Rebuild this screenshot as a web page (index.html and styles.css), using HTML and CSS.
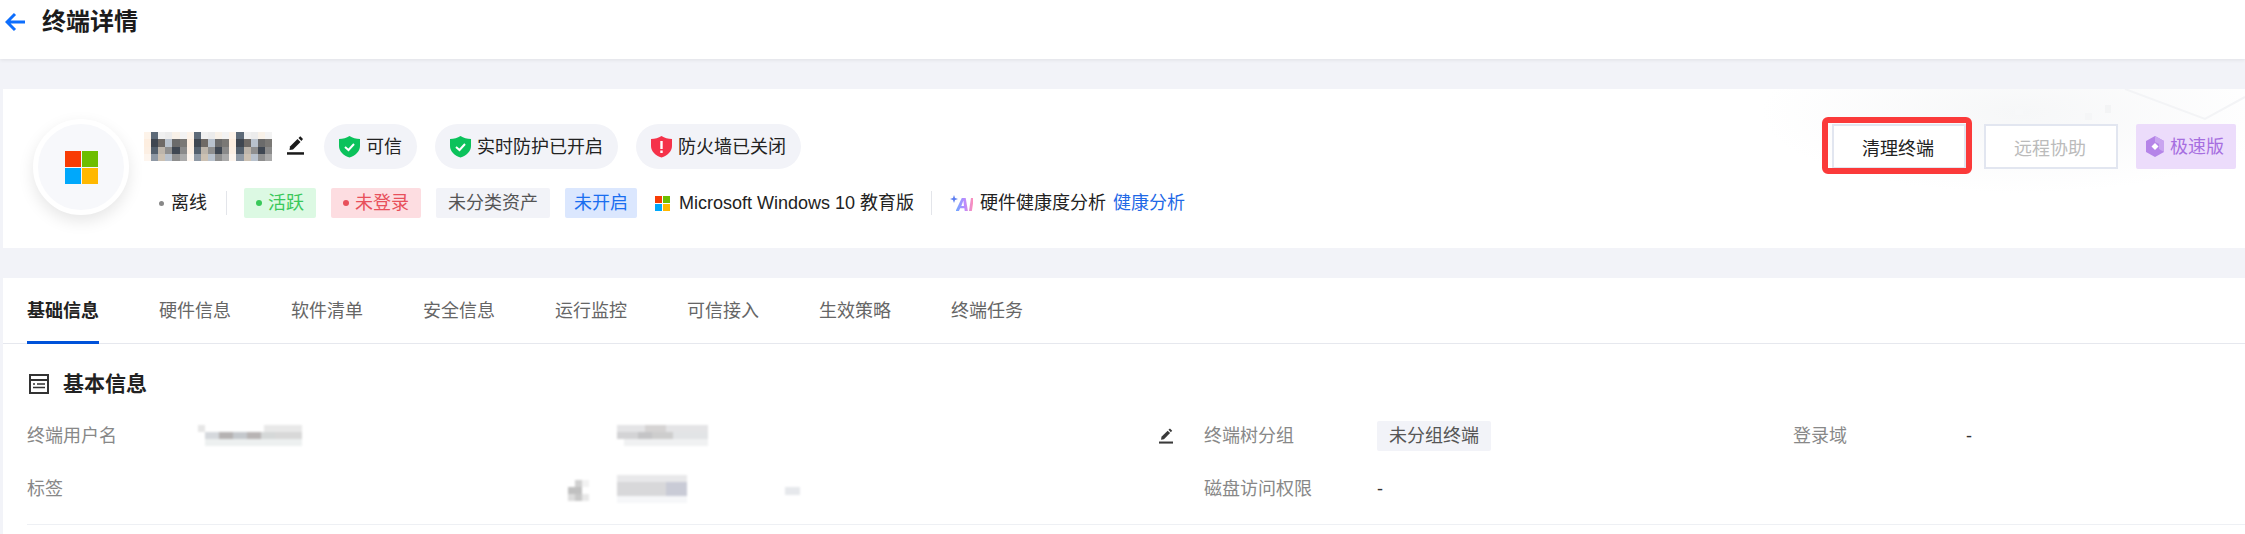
FILE: index.html
```html
<!DOCTYPE html>
<html lang="zh-CN">
<head>
    <meta charset="UTF-8">
    <meta name="viewport" content="width=device-width, initial-scale=1.0">
    <title>终端详情</title>
    <link rel="stylesheet" href="styles.css">
</head>
<body>
    <svg class="defs" width="0" height="0">
        <defs>
            <path id="shield" d="M10.5 0 C13.5 2 17 3 21 3 V10 C21 15.500 16.500 19.500 10.500 21.500 C4.500 19.500 0 15.500 0 10 V3 C4 3 7.500 2 10.500 0 Z"/>
            <g id="pencil" fill="currentColor">
                <path d="M3 10.500 L10.500 3 L13.500 6 L6 13.500 L2.500 14 Z"/>
                <path d="M11.500 2 L13.300 0.300 L16 3 L14.400 4.900 Z"/>
                <rect x="0" y="16.200" width="17" height="2.500"/>
            </g>
            <g id="name-cells" shape-rendering="crispEdges">
                <rect x="0" y="0" width="7" height="7" fill="#fdf3e9"/><rect x="7" y="0" width="7" height="7" fill="#5d6a78"/><rect x="14" y="0" width="7" height="7" fill="#f0f0f0"/><rect x="21" y="0" width="7" height="7" fill="#ececec"/><rect x="28" y="0" width="7" height="7" fill="#f8f1e8"/><rect x="35" y="0" width="7" height="7" fill="#f3f3f3"/>
                <rect x="0" y="7" width="7" height="7" fill="#fdeee0"/><rect x="7" y="7" width="7" height="7" fill="#3f4650"/><rect x="14" y="7" width="7" height="7" fill="#6f6a66"/><rect x="21" y="7" width="7" height="7" fill="#b9c2cd"/><rect x="28" y="7" width="7" height="7" fill="#6b6b6b"/><rect x="35" y="7" width="7" height="7" fill="#7a7875"/>
                <rect x="0" y="14" width="7" height="7" fill="#fcefe3"/><rect x="7" y="14" width="7" height="7" fill="#54606d"/><rect x="14" y="14" width="7" height="7" fill="#bdb5ab"/><rect x="21" y="14" width="7" height="7" fill="#8f8f8f"/><rect x="28" y="14" width="7" height="7" fill="#3f4752"/><rect x="35" y="14" width="7" height="7" fill="#8a8a8a"/>
                <rect x="0" y="21" width="7" height="7" fill="#fdf5ee"/><rect x="7" y="21" width="7" height="7" fill="#8e98a4"/><rect x="14" y="21" width="7" height="7" fill="#cbc0b2"/><rect x="21" y="21" width="7" height="7" fill="#b8c1cc"/><rect x="28" y="21" width="7" height="7" fill="#8e8e8e"/><rect x="35" y="21" width="7" height="7" fill="#aaaaaa"/>
            </g>
        </defs>
    </svg>

    <div class="topbar">
        <svg class="back" width="21" height="20" viewBox="0 0 21 20"><path d="M20 10 H2 M10 2 L2 10 L10 18" fill="none" stroke="#0d6efd" stroke-width="3"/></svg>
        <div class="page-title">终端详情</div>
    </div>

    <div class="content">
        <div class="card summary">
            <svg class="deco" width="330" height="70" viewBox="0 0 330 70">
                <path d="M210 0 L290 30 L330 8" fill="none" stroke="#f3f4f6" stroke-width="2"/>
                <rect x="170" y="24" width="7" height="7" fill="#f5f6f7"/>
                <rect x="190" y="16" width="6" height="8" fill="#f3f4f5"/>
                <rect x="100" y="20" width="8" height="6" fill="#f7f8f9"/>
            </svg>
            <div class="avatar">
                <div class="ms-logo big"><i class="red"></i><i class="green"></i><i class="blue"></i><i class="yellow"></i></div>
            </div>
            <div class="info">
                <div class="info-top">
                    <svg class="mosaic" width="128" height="29" viewBox="0 0 126 28" preserveAspectRatio="none">
                        <use href="#name-cells"/>
                        <use href="#name-cells" x="42"/>
                        <use href="#name-cells" x="84"/>
                    </svg>
                    <svg class="edit" width="17" height="19" viewBox="0 0 17 19"><use href="#pencil"/></svg>
                    <div class="pill">
                        <svg width="21" height="22" viewBox="0 0 21 22"><use href="#shield" fill="#0bc25b"/><path d="M6 11 L9.500 14 L15 8" fill="none" stroke="#fff" stroke-width="2"/></svg>
                        <span>可信</span>
                    </div>
                    <div class="pill">
                        <svg width="21" height="22" viewBox="0 0 21 22"><use href="#shield" fill="#0bc25b"/><path d="M6 11 L9.500 14 L15 8" fill="none" stroke="#fff" stroke-width="2"/></svg>
                        <span>实时防护已开启</span>
                    </div>
                    <div class="pill">
                        <svg width="21" height="22" viewBox="0 0 21 22"><use href="#shield" fill="#f5324a"/><rect x="9.300" y="5" width="2.400" height="8" fill="#fff"/><rect x="9.300" y="14.500" width="2.400" height="2.500" fill="#fff"/></svg>
                        <span>防火墙已关闭</span>
                    </div>
                </div>
                <div class="info-bottom">
                    <div class="status"><i class="dot dot-gray"></i><span>离线</span></div>
                    <div class="split"></div>
                    <div class="tag tag-green"><i class="dot"></i><span>活跃</span></div>
                    <div class="tag tag-red"><i class="dot"></i><span>未登录</span></div>
                    <div class="tag tag-gray"><span>未分类资产</span></div>
                    <div class="tag tag-blue"><span>未开启</span></div>
                    <div class="os">
                        <div class="ms-logo"><i class="red"></i><i class="green"></i><i class="blue"></i><i class="yellow"></i></div>
                        <span>Microsoft Windows 10 教育版</span>
                    </div>
                    <div class="split split-os"></div>
                    <div class="health">
                        <div class="ai-mark">
                            <svg width="8" height="8" viewBox="0 0 8 8"><path d="M4 0 L5 3 L8 4 L5 5 L4 8 L3 5 L0 4 L3 3 Z" fill="#5a7cf0"/></svg>
                            <span>AI</span>
                        </div>
                        <span>硬件健康度分析</span>
                        <a class="link">健康分析</a>
                    </div>
                </div>
            </div>
            <div class="actions">
                <button class="btn btn-marked">清理终端<span class="mark"></span></button>
                <button class="btn btn-off">远程协助</button>
                <div class="speed">
                    <svg width="18" height="21" viewBox="0 0 18 21"><path d="M9 0 L18 5 V16 L9 21 L0 16 V5 Z" fill="#b584e8"/><path d="M9 0 L18 5 V16 L13 13 V8 L9 6 Z" fill="#c9a5f0"/><path d="M9 7 L12.500 10.500 L9 14 L5.500 10.500 Z" fill="#fff"/></svg>
                    <span>极速版</span>
                </div>
            </div>
        </div>

        <div class="card detail">
            <div class="tabs">
                <div class="tab active">基础信息</div>
                <div class="tab">硬件信息</div>
                <div class="tab">软件清单</div>
                <div class="tab">安全信息</div>
                <div class="tab">运行监控</div>
                <div class="tab">可信接入</div>
                <div class="tab">生效策略</div>
                <div class="tab">终端任务</div>
            </div>
            <div class="section">
                <div class="section-title">
                    <svg width="20" height="20" viewBox="0 0 20 20"><rect x="1" y="1" width="18" height="18" fill="none" stroke="#333" stroke-width="2"/><path d="M1 6 H19" stroke="#333" stroke-width="2"/><path d="M4 10 H6 M8 10 H16 M4 13.500 H16" stroke="#333" stroke-width="1.500"/></svg>
                    <span>基本信息</span>
                </div>
                <div class="fields">
                    <div class="field">
                        <div class="label">终端用户名</div>
                        <svg class="blur" width="104" height="21" viewBox="0 0 104 21">
                            <rect x="0" y="0" width="7" height="7" fill="#e6e6e6"/><rect x="66" y="0" width="38" height="7" fill="#e8e8e8"/>
                            <rect x="7" y="7" width="14" height="7" fill="#d5d8dc"/><rect x="21" y="7" width="14" height="7" fill="#b5b2b2"/><rect x="35" y="7" width="14" height="7" fill="#c4c8cc"/><rect x="49" y="7" width="14" height="7" fill="#b8b4b4"/><rect x="63" y="7" width="14" height="7" fill="#d5d8d8"/><rect x="77" y="7" width="27" height="7" fill="#d8d8d8"/>
                            <rect x="7" y="14" width="97" height="7" fill="#edf0f0"/>
                        </svg>
                    </div>
                    <div class="field field-wide">
                        <svg class="blur" width="91" height="21" viewBox="0 0 91 21">
                            <rect x="0" y="0" width="91" height="7" fill="#e4e4e6"/><rect x="28" y="0" width="21" height="7" fill="#d5d3d3"/>
                            <rect x="0" y="7" width="21" height="7" fill="#d3d3d5"/><rect x="21" y="7" width="14" height="7" fill="#c4c4c6"/><rect x="35" y="7" width="21" height="7" fill="#cdcdcd"/><rect x="56" y="7" width="35" height="7" fill="#e2e4e6"/>
                            <rect x="7" y="14" width="84" height="7" fill="#f0f1f2"/>
                        </svg>
                        <svg class="edit edit-small" width="14" height="16" viewBox="0 0 17 19"><use href="#pencil"/></svg>
                    </div>
                    <div class="field">
                        <div class="label">终端树分组</div>
                        <div class="tag tag-gray tag-group"><span>未分组终端</span></div>
                    </div>
                    <div class="field">
                        <div class="label">登录域</div>
                        <div class="value">-</div>
                    </div>
                    <div class="field">
                        <div class="label">标签</div>
                    </div>
                    <div class="field field-tail">
                        <svg class="blur blur-icon" width="21" height="21" viewBox="0 0 21 21">
                            <rect x="7" y="0" width="7" height="7" fill="#d0d0d0"/><rect x="14" y="0" width="7" height="7" fill="#f2f2f2"/>
                            <rect x="0" y="7" width="14" height="7" fill="#c0c0c0"/>
                            <rect x="0" y="14" width="7" height="7" fill="#dcdcdc"/><rect x="7" y="14" width="7" height="7" fill="#c8c8c8"/><rect x="14" y="14" width="7" height="7" fill="#e8e8e8"/>
                        </svg>
                        <svg class="blur" width="70" height="28" viewBox="0 0 70 28">
                            <rect x="0" y="0" width="70" height="7" fill="#e8e8ea"/>
                            <rect x="0" y="7" width="49" height="14" fill="#d8d8da"/><rect x="49" y="7" width="21" height="14" fill="#c9cbd6"/>
                            <rect x="0" y="21" width="70" height="7" fill="#f6f7f9"/>
                        </svg>
                        <svg class="blur blur-end" width="15" height="8" viewBox="0 0 15 8"><rect width="15" height="8" fill="#e6e8ec"/></svg>
                    </div>
                    <div class="field">
                        <div class="label">磁盘访问权限</div>
                        <div class="value">-</div>
                    </div>
                    <div class="field"></div>
                </div>
            </div>
        </div>
    </div>
</body>
</html>
```

FILE: styles.css
```css
* {
    box-sizing: border-box;
}

html, body {
    height: 534px;
    overflow: hidden;
}

body {
    font-family: "Liberation Sans", "Noto Sans CJK SC", sans-serif;
    font-size: 18px;
    line-height: 18px;
    background-color: #f2f3f8;
    color: #222;
    margin: 0;
    padding: 0;
}

.defs {
    display: block;
}

.topbar {
    display: flex;
    align-items: flex-start;
    height: 59px;
    padding: 12px 0 0 5px;
    background-color: #fff;
    box-shadow: 0 1px 4px rgba(0, 0, 0, 0.08);
}

.back {
    margin-right: 16px;
}

.page-title {
    font-size: 24px;
    line-height: 20px;
    font-weight: bold;
    color: #1c1c1c;
}

.content {
    padding: 30px 0 0 3px;
}

.card {
    background-color: #fff;
}

.summary {
    position: relative;
    display: flex;
    height: 159px;
    padding: 30px 9px 0 30px;
    background-image: radial-gradient(ellipse 260px 80px at 90% 15%, #f6f7f8, #fff);
}

.deco {
    position: absolute;
    top: 0;
    right: 0;
}

.avatar {
    display: flex;
    align-items: center;
    justify-content: center;
    width: 96px;
    height: 96px;
    border: 5px solid #fff;
    border-radius: 50%;
    background-color: #f7f8fb;
    box-shadow: 0 6px 16px rgba(0, 0, 0, 0.1);
}

.ms-logo {
    display: grid;
    grid-template-columns: 7px 7px;
    grid-auto-rows: 7px;
    gap: 1px;
    width: 15px;
    height: 15px;
}

.ms-logo.big {
    grid-template-columns: 16px 16px;
    grid-auto-rows: 16px;
    width: 33px;
    height: 33px;
}

.red { background-color: #f83c05; }
.green { background-color: #6dbe00; }
.blue { background-color: #00a8fb; }
.yellow { background-color: #ffb800; }

.info {
    position: relative;
    margin-left: 15px;
    padding-top: 5px;
}

.info-top {
    display: flex;
    align-items: center;
    height: 45px;
}

.mosaic {
    filter: blur(0.4px);
}

.edit {
    margin: 0 20px 2px 15px;
    color: #1a1a1a;
}

.pill {
    display: flex;
    align-items: center;
    gap: 6px;
    height: 45px;
    margin-right: 18px;
    padding: 0 15px;
    border-radius: 23px;
    background-color: #f2f3f8;
}

.info-bottom {
    display: flex;
    align-items: center;
    height: 30px;
    margin-top: 19px;
    padding-left: 15px;
}

.status {
    display: flex;
    align-items: center;
    gap: 7px;
}

.dot {
    display: block;
    width: 6px;
    height: 6px;
    border-radius: 50%;
    background-color: currentColor;
}

.dot-gray {
    width: 5px;
    height: 5px;
    background-color: #888;
}

.split {
    width: 1px;
    height: 24px;
    margin: 0 17px 0 19px;
    background-color: #e3e5ea;
}

.split-os {
    margin: 0 18px 0 17px;
}

.tag {
    display: flex;
    align-items: center;
    gap: 6px;
    height: 30px;
    margin-right: 15px;
    padding: 0 12px;
    border-radius: 2px;
}

.tag-green {
    background-color: #dcf9e3;
    color: #3ac85a;
}

.tag-red {
    background-color: #fddde1;
    color: #e8505b;
}

.tag-gray {
    background-color: #f2f3f8;
    color: #555;
}

.tag-blue {
    padding: 0 9px;
    margin-right: 18px;
    background-color: #dbe7fe;
    color: #1a6ef0;
}

.os {
    display: flex;
    align-items: center;
    gap: 9px;
    white-space: nowrap;
}

.health {
    display: flex;
    align-items: center;
    gap: 7px;
    white-space: nowrap;
}

.ai-mark {
    display: flex;
    align-items: flex-start;
    width: 23px;
    height: 16px;
}

.ai-mark svg {
    flex-shrink: 0;
    margin-right: -2px;
}

.ai-mark span {
    font-family: Inter, sans-serif;
    font-size: 17px;
    line-height: 16px;
    margin-top: 2px;
    letter-spacing: -0.5px;
    font-weight: 800;
    font-style: italic;
    background-image: linear-gradient(90deg, #6ea8ff, #b98bff, #ff8fb8);
    -webkit-background-clip: text;
    background-clip: text;
    color: transparent;
}

.link {
    color: #1f69e6;
}

.actions {
    display: flex;
    gap: 18px;
    margin-left: auto;
    padding-top: 5px;
    position: relative;
}

.btn {
    position: relative;
    width: 134px;
    height: 45px;
    border: 2px solid #e2e6f0;
    background-color: #fff;
    font-family: inherit;
    font-size: 18px;
    color: #222;
    padding: 0 2px 0 0;
}

.btn-off {
    color: #bbb;
}

.mark {
    position: absolute;
    top: -9px;
    left: -12px;
    width: 150px;
    height: 57px;
    border: 6px solid #fb3a3a;
    border-radius: 6px;
}

.speed {
    display: flex;
    align-items: center;
    gap: 6px;
    width: 100px;
    height: 45px;
    padding-left: 10px;
    border-radius: 2px;
    background-color: #ecdcfb;
    color: #a66ee0;
}

.detail {
    height: 256px;
    margin-top: 30px;
}

.tabs {
    display: flex;
    gap: 60px;
    height: 66px;
    padding-left: 24px;
    border-bottom: 1px solid #e6e8ee;
}

.tab {
    height: 66px;
    padding-top: 24px;
    border-bottom: 3px solid transparent;
    color: #666;
}

.tab.active {
    border-bottom-color: #0052d9;
    color: #222;
    font-weight: bold;
}

.section {
    padding-left: 24px;
}

.section-title {
    display: flex;
    align-items: center;
    height: 21px;
    margin: 29px 0 15px;
    padding-left: 2px;
    font-size: 21px;
    font-weight: bold;
}

.section-title span {
    margin-left: 14px;
}

.fields {
    display: grid;
    grid-template-columns: 590px 587px 589px 1fr;
    grid-auto-rows: 53px;
    padding-bottom: 9px;
    border-bottom: 1px solid #eef0f4;
    box-sizing: content-box;
}

.field {
    display: flex;
    align-items: center;
}

.label {
    width: 173px;
    flex-shrink: 0;
    color: #888;
}

.value {
    color: #333;
}

.blur {
    filter: blur(0.8px);
}

.edit-small {
    margin: 0 0 0 451px;
    color: #3a3a3a;
}

.field:first-child .blur {
    margin-left: -2px;
}

.tag-group {
    margin: 0;
}

.blur-icon {
    margin: 4px 28px 0 -49px;
}

.blur-end {
    margin: 5px 0 0 98px;
}
```
